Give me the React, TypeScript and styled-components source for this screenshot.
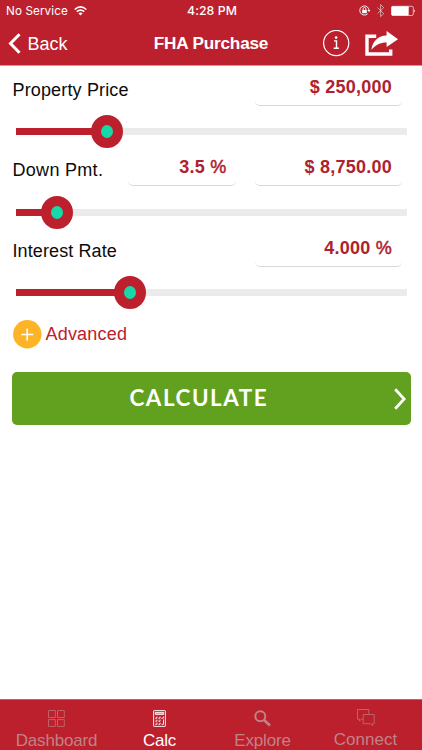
import React from "react";
import styled, { createGlobalStyle } from "styled-components";

const red = "#bd202d";

const GlobalStyle = createGlobalStyle`
  * { box-sizing: border-box; }
  html, body { margin: 0; background: #fff; }
  body { font-family: "Liberation Sans", Arial, sans-serif; overflow: hidden; }
  svg { display: block; flex: none; }
  button { font: inherit; color: inherit; border: 0; background: none; padding: 0; margin: 0; text-align: left; }
`;

const Screen = styled.div`
  width: 422px;
  height: 750px;
  display: flex;
  flex-direction: column;
  background: #fff;
`;

const Header = styled.header`
  height: 66px;
  flex: none;
  background: ${red};
  border-bottom: 1px solid #ed8b92;
  color: #fff;
`;

const StatusBar = styled.div`
  height: 22px;
  display: grid;
  grid-template-columns: 1fr auto 1fr;
  align-items: center;
  padding: 0 6px;
`;

const StatusGroup = styled.div<{ $end?: boolean }>`
  display: flex;
  align-items: center;
  justify-content: ${(p) => (p.$end ? "flex-end" : "flex-start")};
`;

const StatusText = styled.span<{ $strong?: boolean }>`
  font: ${(p) => (p.$strong ? 500 : 400)} ${(p) => (p.$strong ? "12.3px" : "11.7px")}/22px Inter, sans-serif;
  letter-spacing: ${(p) => (p.$strong ? "0.05px" : "0.1px")};
  margin-left: ${(p) => (p.$strong ? "2px" : "0")};
  margin-right: ${(p) => (p.$strong ? "0" : "6px")};
  white-space: nowrap;
`;

const NavBar = styled.nav`
  height: 43px;
  display: grid;
  grid-template-columns: 1fr auto 1fr;
  align-items: center;
  padding: 0 24px 0 8px;
`;

const BackButton = styled.button`
  display: flex;
  align-items: center;
  gap: 6.5px;
  font-size: 18px;
  line-height: 42px;
`;

const Title = styled.h1`
  margin: 0 0 0 16px;
  font-weight: 700;
  font-size: 17.2px;
  line-height: 40px;
  padding-bottom: 2px;
  letter-spacing: -0.2px;
`;

const Actions = styled.div`
  display: flex;
  justify-content: flex-end;
  align-items: center;
  gap: 15px;
`;

const Main = styled.main`
  flex: 1;
  padding-top: 1.5px;
`;

const Group = styled.section`
  height: 80.5px;
`;

const Fields = styled.div`
  height: 47.5px;
  display: flex;
  padding: 0 20.5px 0 12.5px;
`;

const Label = styled.label<{ $spacing: number }>`
  flex: 1;
  font-size: 18px;
  line-height: 44px;
  letter-spacing: ${(p) => p.$spacing}px;
  color: #0b0b0b;
  white-space: nowrap;
`;

const Field = styled.div<{ $width: number }>`
  width: ${(p) => p.$width}px;
  height: 36px;
  margin: 2px 0 0 18.5px;
  padding-right: 9.5px;
  border-radius: 5px;
  border-bottom: 1px solid #d8d8d8;
  font-size: 18px;
  font-weight: 700;
  letter-spacing: 0.25px;
  line-height: 35px;
  text-align: right;
  white-space: nowrap;
  color: #ad222e;
`;

const Unit = styled.span`
  font-weight: 400;
  -webkit-text-stroke: 0.5px currentColor;
`;

const SliderRow = styled.div`
  height: 33px;
  margin: 0 15.5px;
  display: flex;
  align-items: center;
`;

const Track = styled.div<{ $filled?: boolean; $width?: number }>`
  height: 7px;
  width: ${(p) => (p.$width ? `${p.$width}px` : "auto")};
  flex: ${(p) => (p.$filled ? "none" : "1")};
  background: ${(p) => (p.$filled ? red : "#ebebeb")};
`;

const Thumb = styled.div`
  width: 32px;
  height: 33px;
  margin: 0 -1px;
  border-radius: 50%;
  background: ${red};
  display: grid;
  place-items: center;
  z-index: 1;
`;

const ThumbDot = styled.div`
  width: 12px;
  height: 13px;
  border-radius: 50%;
  background: #16d9aa;
`;

const Advanced = styled.button`
  display: flex;
  align-items: center;
  gap: 4px;
  margin: 11px 0 0 12.5px;
  height: 29px;
  font-size: 18px;
  letter-spacing: 0.2px;
  color: ${red};
`;

const Calculate = styled.button`
  display: grid;
  grid-template-columns: 118px auto 1fr;
  align-items: center;
  width: 399px;
  height: 53px;
  margin: 23px 0 0 11.5px;
  padding-right: 5px;
  border-radius: 5px;
  background: #62a11f;
  color: #fff;
`;

const CalculateText = styled.span`
  grid-column: 2;
  font: 700 22.4px/49px Lato, sans-serif;
  padding-bottom: 2px;
  letter-spacing: 1.55px;
`;

const Chevron = styled.span`
  justify-self: end;
`;

const TabBar = styled.nav`
  height: 51.5px;
  flex: none;
  display: grid;
  grid-template-columns: repeat(4, 1fr);
  padding: 0 5px;
  border-top: 1px solid #d35b66;
  background: ${red};
`;

const Tab = styled.button<{ $active?: boolean; $raise?: boolean }>`
  display: flex;
  flex-direction: column;
  align-items: center;
  padding-top: ${(p) => (p.$raise ? 9 : 10)}px;
  color: ${(p) => (p.$active ? "#fff" : "#bd8386")};
`;

const TabIcon = styled.span<{ $dim?: boolean }>`
  height: 19px;
  opacity: ${(p) => (p.$dim ? 0.85 : 1)};
`;

const TabText = styled.span<{ $spacing: number }>`
  font-size: 17px;
  line-height: 23px;
  letter-spacing: ${(p) => p.$spacing}px;
`;

type Value = { text: string; unit?: string; width: number };
const groups: { label: string; spacing: number; values: Value[]; fill: number }[] = [
  { label: "Property Price", spacing: 0.15, values: [{ text: "$ 250,000", width: 147 }], fill: 76.5 },
  {
    label: "Down Pmt.",
    spacing: 0.3,
    values: [{ text: "3.5", unit: "%", width: 108 }, { text: "$ 8,750.00", width: 147 }],
    fill: 26,
  },
  { label: "Interest Rate", spacing: 0.1, values: [{ text: "4.000", unit: "%", width: 147 }], fill: 99 },
];

const WifiIcon = () => (
  <svg width="13" height="10" viewBox="0 0 13 10" fill="none" stroke="#fff" strokeWidth="1.6">
    <path d="M.7 3.5Q6.5-1.6 12.3 3.5M2.7 5.7Q6.5 2.4 10.3 5.7" />
    <path d="M4.4 7.2Q6.5 5.6 8.6 7.2L6.5 9.5Z" fill="#fff" stroke="none" />
  </svg>
);

const StatusIcons = () => (
  <svg width="58" height="14" viewBox="358 4 58 14" fill="none" stroke="#fff">
    <path d="M367.6 13.8A4.6 4.6 0 1 1 369 10.7" strokeWidth=".9" />
    <path d="m367.3 10 1.8 2.1 1.3-2.1Z" fill="#fff" stroke="none" />
    <rect x="362.2" y="10" width="4.6" height="3.2" fill="#fff" stroke="none" />
    <path d="M363.1 10.2V8.9a1.4 1.4 0 0 1 2.8 0v1.3" strokeWidth=".9" />
    <path d="m377.5 7.6 6.2 6-3.1 3V4.6l3.1 3-6.2 6" strokeWidth=".9" opacity=".6" />
    <rect x="391.5" y="6.3" width="21.8" height="9.2" rx="1.5" strokeWidth=".8" opacity=".8" />
    <rect x="391.5" y="6.2" width="17.2" height="9.4" rx="1" fill="#fff" stroke="none" />
    <path d="M414.2 9.2q1.8 1.7 0 3.4Z" fill="#fff" stroke="none" />
  </svg>
);

const InfoIcon = () => (
  <svg width="27" height="27" viewBox="0 0 27 27" fill="none" stroke="#fff">
    <circle cx="13.2" cy="13" r="12.6" strokeWidth="1.2" />
    <circle cx="13.1" cy="7.6" r="1.3" fill="#fff" stroke="none" />
    <path d="M11 10.9h2.5v7.3M10.7 18.3h5.2" strokeWidth="1.4" />
  </svg>
);

const ShareIcon = () => (
  <svg width="33" height="26" viewBox="0 0 33 26">
    <path d="M11.2 5.2H2v17.8h23.7v-4.6" fill="none" stroke="#fff" strokeWidth="3.4" />
    <path d="M21.6 0 33 8.2 21.6 16v-4.4C15 11.6 11 14 6.4 18.7 7.6 10.2 13.3 4.7 21.6 4.6Z" fill="#fff" />
  </svg>
);

const DashboardIcon = () => (
  <svg width="17" height="17" viewBox="0 0 17 17" fill="none" stroke="currentColor" strokeWidth=".8">
    <path d="M.5.5h6.8v7H.5zm9 0h6.8v7H9.5zM.5 9.6h6.8v6.8H.5zm9 0h6.8v6.8H9.5z" />
  </svg>
);

const CalcIcon = () => (
  <svg width="13" height="17" viewBox="0 0 13 17" fill="none" stroke="currentColor" strokeWidth=".9">
    <rect x=".6" y=".6" width="11.8" height="15.8" rx=".5" />
    <path d="M2.3 2.4h8.4v2H2.3z" fill="currentColor" fillOpacity=".5" />
    <path d="M2.2 8.2h1.7V6.5M5.3 8.2H7V6.5M8.4 8.2h2V6.5M2.2 11.2h1.7V9.5M5.3 11.2H7V9.5M2.2 14.3h1.7v-1.7M5.3 14.3H7v-1.7M8.5 14.3h2V9.5" />
  </svg>
);

const ExploreIcon = () => (
  <svg width="17" height="17" viewBox="0 0 17 17" fill="none" stroke="currentColor">
    <circle cx="6.3" cy="6.2" r="5" strokeWidth="2" />
    <path d="m10 10 6 5.6" strokeWidth="2.7" />
  </svg>
);

const ConnectIcon = () => (
  <svg width="18" height="17" viewBox="0 0 18 17" fill="none" stroke="currentColor" strokeWidth=".8">
    <path d="M6 10.2H4.4L2.5 12v-1.8H.5V.5h11.3v5" />
    <path d="M6.2 5.5h11v9.2h-1.7v1.8l-2.3-1.8h-7z" />
  </svg>
);

const tabs = [
  { label: "Dashboard", icon: <DashboardIcon />, spacing: -0.17, dim: true },
  { label: "Calc", icon: <CalcIcon />, spacing: -0.2, active: true },
  { label: "Explore", icon: <ExploreIcon />, spacing: -0.15 },
  { label: "Connect", icon: <ConnectIcon />, spacing: 0, raise: true },
];

export default function App() {
  return (
    <Screen>
      <GlobalStyle />
      <Header>
        <StatusBar>
          <StatusGroup>
            <StatusText>No Service</StatusText>
            <WifiIcon />
          </StatusGroup>
          <StatusText $strong>4:28 PM</StatusText>
          <StatusGroup $end><StatusIcons /></StatusGroup>
        </StatusBar>
        <NavBar>
          <BackButton>
            <svg width="13" height="21" viewBox="0 0 13 21" fill="none" stroke="#fff" strokeWidth="3">
              <path d="m11.5 1.2-9 9.3 9 9.3" />
            </svg>
            Back
          </BackButton>
          <Title>FHA Purchase</Title>
          <Actions><InfoIcon /><ShareIcon /></Actions>
        </NavBar>
      </Header>
      <Main>
        {groups.map((group) => (
          <Group key={group.label}>
            <Fields>
              <Label $spacing={group.spacing}>{group.label}</Label>
              {group.values.map((v) => (
                <Field key={v.text} $width={v.width}>
                  {v.text}
                  {v.unit && <Unit> {v.unit}</Unit>}
                </Field>
              ))}
            </Fields>
            <SliderRow>
              <Track $filled $width={group.fill} />
              <Thumb><ThumbDot /></Thumb>
              <Track />
            </SliderRow>
          </Group>
        ))}
        <Advanced>
          <svg width="29" height="29" viewBox="0 0 29 29">
            <circle cx="14.3" cy="14.3" r="14.2" fill="#fdb426" />
            <path d="M8.2 14.5h12M14.2 8.5v12" stroke="#fff" strokeWidth="1.6" />
          </svg>
          Advanced
        </Advanced>
        <Calculate>
          <CalculateText>CALCULATE</CalculateText>
          <Chevron>
            <svg width="12" height="22" viewBox="0 0 12 22" fill="none" stroke="#fff" strokeWidth="2.8">
              <path d="m1.2 1.2 9 9.8-9 9.8" />
            </svg>
          </Chevron>
        </Calculate>
      </Main>
      <TabBar>
        {tabs.map((tab) => (
          <Tab key={tab.label} $active={tab.active} $raise={tab.raise}>
            <TabIcon $dim={tab.dim || tab.raise}>{tab.icon}</TabIcon>
            <TabText $spacing={tab.spacing}>{tab.label}</TabText>
          </Tab>
        ))}
      </TabBar>
    </Screen>
  );
}
